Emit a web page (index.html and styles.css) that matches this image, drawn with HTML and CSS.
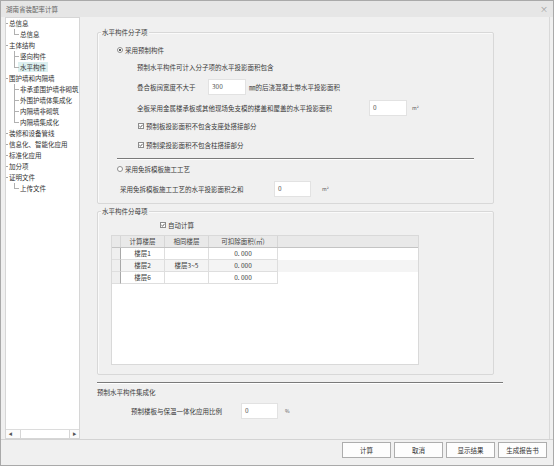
FILE: index.html
```html
<!DOCTYPE html>
<html lang="zh-CN">
<head>
<meta charset="utf-8">
<title>湖南省装配率计算</title>
<link rel="stylesheet" href="styles.css">
</head>
<body>
<div class="window">
  <div class="titlebar"><span class="title">湖南省装配率计算</span><span class="close">×</span></div>
  <div class="content">
    <div class="tree">
      <div class="tree-list">
        <div class="node root">总信息</div>
        <div class="node child last">总信息</div>
        <div class="node root">主体结构</div>
        <div class="node child">竖向构件</div>
        <div class="node child last"><span class="sel">水平构件</span></div>
        <div class="node root">围护墙和内隔墙</div>
        <div class="node child">非承重围护墙非砌筑</div>
        <div class="node child">外围护墙体集成化</div>
        <div class="node child">内隔墙非砌筑</div>
        <div class="node child last">内隔墙集成化</div>
        <div class="node root">装修和设备管线</div>
        <div class="node root">信息化、智能化应用</div>
        <div class="node root">标准化应用</div>
        <div class="node root">加分项</div>
        <div class="node root">证明文件</div>
        <div class="node child last">上传文件</div>
      </div>
      <div class="hscroll">
        <span class="sbtn">&#9664;</span>
        <span class="thumb"></span>
        <span class="sbtn">&#9654;</span>
      </div>
    </div>
    <div class="main">
      <div class="group g1">
        <span class="legend">水平构件分子项</span>
        <div class="row r-radio1"><span class="radio on"></span><span class="rlabel">采用预制构件</span></div>
        <div class="row r-text"><span>预制水平构件可计入分子项的水平投影面积包含</span></div>
        <div class="row r-in1"><span class="lab lab1">叠合板阔宽度不大于</span><span class="input w38">300</span><span class="after">㎜的后浇混凝土带水平投影面积</span></div>
        <div class="row r-in2"><span class="lab lab2">全板采用金属楼承板或其他现场免支模的楼盖和屋盖的水平投影面积</span><span class="input w38">0</span><span class="unit u5">m²</span></div>
        <div class="row r-chk1"><span class="check"><svg viewBox="0 0 6 6" width="6" height="6"><rect x="0.5" y="0.5" width="5" height="5" fill="#fff" stroke="#8c8c8c"/><path d="M1.4 3.1 L2.5 4.2 L4.6 1.8" fill="none" stroke="#333" stroke-width="0.8"/></svg></span><span class="clabel">预制板投影面积不包含支座处搭接部分</span></div>
        <div class="row r-chk2"><span class="check"><svg viewBox="0 0 6 6" width="6" height="6"><rect x="0.5" y="0.5" width="5" height="5" fill="#fff" stroke="#8c8c8c"/><path d="M1.4 3.1 L2.5 4.2 L4.6 1.8" fill="none" stroke="#333" stroke-width="0.8"/></svg></span><span class="clabel">预制梁投影面积不包含柱搭接部分</span></div>
        <div class="sep inner-sep"></div>
        <div class="row r-radio2"><span class="radio"></span><span class="rlabel">采用免拆模板施工工艺</span></div>
        <div class="row r-in3"><span class="lab lab3">采用免拆模板施工工艺的水平投影面积之和</span><span class="input w37">0</span><span class="unit u11">m²</span></div>
      </div>
      <div class="group g2">
        <span class="legend">水平构件分母项</span>
        <div class="row r-auto"><span class="check"><svg viewBox="0 0 6 6" width="6" height="6"><rect x="0.5" y="0.5" width="5" height="5" fill="#fff" stroke="#8c8c8c"/><path d="M1.4 3.1 L2.5 4.2 L4.6 1.8" fill="none" stroke="#333" stroke-width="0.8"/></svg></span><span class="clabel">自动计算</span></div>
        <div class="grid">
          <div class="ghead">
            <span class="c c0"></span>
            <span class="c c1">计算楼层</span>
            <span class="c c2">相同楼层</span>
            <span class="c c3">可扣除面积(㎡)</span>
          </div>
          <div class="grow">
            <span class="c c0"></span><span class="c c1">楼层1</span><span class="c c2"></span><span class="c c3">0. 000</span>
          </div>
          <div class="grow alt">
            <span class="c c0"></span><span class="c c1">楼层2</span><span class="c c2">楼层3~5</span><span class="c c3">0. 000</span>
          </div>
          <div class="grow">
            <span class="c c0"></span><span class="c c1">楼层6</span><span class="c c2"></span><span class="c c3">0. 000</span>
          </div>
        </div>
      </div>
      <div class="sep outer-sep"></div>
      <div class="section-title">预制水平构件集成化</div>
      <div class="row r-in4"><span class="lab lab4">预制楼板与保温一体化应用比例</span><span class="input w37">0</span><span class="unit u7">%</span></div>
    </div>
  </div>
  <div class="footer">
    <button class="btn">计算</button>
    <button class="btn">取消</button>
    <button class="btn">显示结果</button>
    <button class="btn">生成报告书</button>
  </div>
</div>
</body>
</html>
```

FILE: styles.css
```css
* { box-sizing: border-box; }
html, body { margin: 0; padding: 0; background: #ffffff; }
body {
  font-family: "Noto Sans CJK SC", "Noto Sans", sans-serif;
  font-size: 6.5px;
  line-height: 10px;
  color: #3a3a3a;
}
.window {
  width: 554px;
  height: 466px;
  border: 1px solid #a9a9a9;
  background: #f0f0f0;
  display: flex;
  flex-direction: column;
}
.titlebar {
  flex: none;
  height: 16px;
  background: #e6e6e6;
  display: flex;
  align-items: center;
  justify-content: space-between;
  padding: 0 5px 0 5px;
  color: #666;
}
.close { font-size: 8px; color: #9a9a9a; }
.content {
  flex: none;
  height: 423px;
  display: flex;
  border-bottom: 1px solid #d3d3d3;
}
/* tree */
.tree {
  width: 75px;
  margin-left: 4px;
  background: #fff;
  border: 1px solid #d6d6d6;
  display: flex;
  flex-direction: column;
}
.tree-list { flex: 1; }
.node {
  position: relative;
  height: 11px;
  line-height: 11px;
  white-space: nowrap;
  overflow: hidden;
  color: #333;
}
.node.root { padding-left: 3px; }
.node.root::before {
  content: "";
  position: absolute;
  left: 0;
  top: 5px;
  width: 2px;
  height: 1px;
  background: #a8a8a8;
}
.node.child { padding-left: 14px; }
.node.child::before {
  content: "";
  position: absolute;
  left: 8px;
  top: 0;
  width: 1px;
  height: 11px;
  background: #b0b0b0;
}
.node.child.last::before { height: 6px; }
.node.child::after {
  content: "";
  position: absolute;
  left: 8px;
  top: 5px;
  width: 5px;
  height: 1px;
  background: #b0b0b0;
}
.sel {
  display: inline-block;
  margin-left: -2px;
  padding: 0 2px;
  height: 10px;
  line-height: 10px;
  background: #dcefef;
}
.hscroll {
  flex: none;
  height: 9px;
  border-top: 1px solid #dcdcdc;
  display: flex;
  align-items: stretch;
  background: #fbfbfb;
}
.sbtn {
  width: 9px;
  font-size: 4px;
  line-height: 8px;
  text-align: center;
  color: #555;
}
.thumb {
  width: 51px;
  margin-left: 5px;
  margin-right: 0;
  border-left: 1px solid #d6d6d6;
  border-right: 1px solid #d6d6d6;
  background: #ffffff;
}
.hscroll .sbtn:last-child { margin-left: auto; }
/* main */
.main {
  width: 470px;
  border-right: 1px solid #d9d9d9;
  padding-top: 15px;
}
.group {
  position: relative;
  width: 397px;
  margin-left: 17px;
  border: 1px solid #d8d8d8;
  border-radius: 2px;
  box-shadow: inset 1px 1px 0 #fafafa;
}
.g1 { height: 172px; padding-top: 11px; }
.g2 { height: 164px; margin-top: 7px; padding-top: 7px; }
.legend {
  position: absolute;
  left: 3px;
  top: -6px;
  padding: 0 1px;
  line-height: 10px;
  background: #f0f0f0;
  color: #3a3a3a;
}
.row {
  display: flex;
  align-items: center;
  white-space: nowrap;
}
.radio {
  flex: none;
  position: relative;
  width: 6px;
  height: 6px;
  border: 1px solid #8e8e8e;
  border-radius: 50%;
  background: #fff;
}
.radio.on::after {
  content: "";
  position: absolute;
  left: 1px;
  top: 1px;
  width: 2px;
  height: 2px;
  border-radius: 50%;
  background: #222;
}
.rlabel { margin-left: 2px; }
.check { flex: none; width: 6px; height: 6px; display: flex; }
.clabel { margin-left: 2px; }
.input {
  flex: none;
  height: 16px;
  background: #fff;
  border: 1px solid #e2e2e2;
  padding-left: 3px;
  line-height: 12px;
  color: #555;
}
.w38 { width: 38px; }
.w37 { width: 37px; }
.after { margin-left: 3px; }
.unit { font-size: 5px; color: #555; }
.u5 { margin-left: 5px; }
.u11 { margin-left: 11px; }
.u7 { margin-left: 7px; }
.r-radio1 { height: 12px; padding-left: 19px; }
.r-text { height: 12px; margin-top: 5px; padding-left: 39px; }
.r-in1 { height: 16px; margin-top: 6px; padding-left: 39px; }
.r-in2 { height: 16px; margin-top: 5px; padding-left: 39px; }
.lab { flex: none; }
.lab1 { width: 71px; }
.lab2 { width: 232px; }
.lab3 { width: 154px; }
.lab4 { width: 110px; }
.r-chk1 { height: 12px; margin-top: 4px; padding-left: 40px; }
.r-chk2 { height: 12px; margin-top: 7px; padding-left: 40px; }
.sep {
  height: 2px;
  border-top: 1px solid #7a7a7a;
  border-bottom: 1px solid #ffffff;
}
.inner-sep { width: 357px; margin-left: 19px; margin-top: 7px; }
.r-radio2 { height: 12px; margin-top: 3px; padding-left: 19px; }
.r-in3 { height: 16px; margin-top: 6px; padding-left: 22px; }
.r-auto { height: 12px; padding-left: 62px; }
/* grid */
.grid {
  width: 308px;
  height: 130px;
  margin-top: 4px;
  margin-left: 13px;
  background: #fff;
  border: 1px solid #d9d9d9;
}
.ghead {
  display: flex;
  height: 12px;
  background: #e9e9e9;
  border-bottom: 1px solid #c4c4c4;
  color: #444;
}
.ghead .c { border-right: 1px solid #d6d6d6; }
.grow {
  display: flex;
  height: 12px;
}
.grow.alt { background: #f4f4f4; }
.c {
  flex: none;
  height: 11px;
  line-height: 11px;
  text-align: center;
  white-space: nowrap;
}
.grow .c { border-right: 1px solid #dedede; border-bottom: 1px solid #dedede; height: 12px; }
.c0 { width: 9px; }
.grow .c0 { background: #efefef; border-right: 1px solid #a8a8a8; }
.c1 { width: 44px; }
.c2 { width: 44px; }
.c3 { width: 69px; }
.outer-sep { width: 406px; margin-left: 17px; margin-top: 7px; }
.section-title {
  height: 10px;
  margin-top: 3px;
  margin-left: 17px;
}
.r-in4 { height: 16px; margin-top: 6px; padding-left: 51px; }
/* footer */
.footer {
  flex: 1;
  display: flex;
  justify-content: flex-end;
  align-items: flex-start;
  gap: 3px;
  padding: 2px 6px 0 0;
}
.btn {
  width: 49px;
  height: 16px;
  margin: 0;
  padding: 0;
  border: 1px solid #adadad;
  background: #fdfdfd;
  font-family: "Noto Sans CJK SC", "Noto Sans", sans-serif;
  font-size: 6.5px;
  color: #333;
}
```
